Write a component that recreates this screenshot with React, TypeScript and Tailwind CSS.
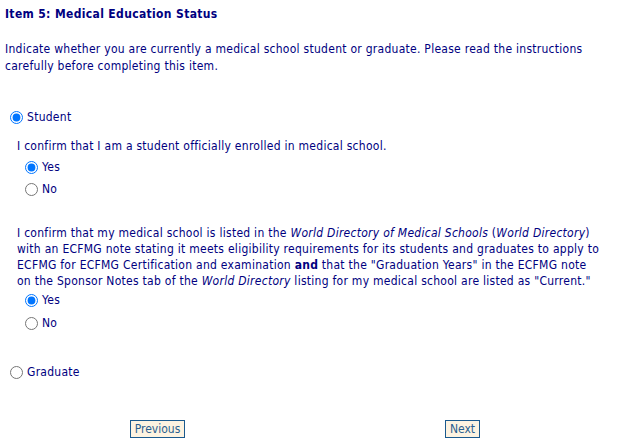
import React from 'react';

const FONT = 'font-["Tahoma","DejaVu_Sans_Condensed","DejaVu_Sans",sans-serif]';

function Radio({ checked, label, indent }: { checked?: boolean; label: string; indent?: boolean }) {
  return (
    <label className={`flex items-center h-[16px] ${indent ? 'pl-[20px]' : 'pl-[5px]'}`}>
      <input
        type="radio"
        defaultChecked={checked}
        className="m-0 w-[13px] h-[13px]"
        readOnly
      />
      <span className="ml-[4px]">{label}</span>
    </label>
  );
}

export default function App() {
  return (
    <div className={`w-[620px] h-[447px] bg-white px-[5px] text-[12px] leading-[16px] tracking-[0.27px] text-[#000080] ${FONT}`}>
      <div className="pr-[12px]">
        <div className="pt-[6px] font-bold tracking-[0.35px]">Item 5: Medical Education Status</div>

        <p className="mt-[19px] leading-[17px]">
          Indicate whether you are currently a medical school student or graduate. Please read the instructions
          carefully before completing this item.
        </p>

        {/* Student */}
        <div className="mt-[34px]">
          <Radio checked label="Student" />
        </div>

        <div className="pl-[12px]">
          <p className="mt-[13px]">I confirm that I am a student officially enrolled in medical school.</p>
          <div className="mt-[5px] flex flex-col gap-[6px] -ml-[12px]">
            <Radio checked indent label="Yes" />
            <Radio indent label="No" />
          </div>

          <p className="mt-[28px]">
            I confirm that my medical school is listed in the <i>World Directory of Medical Schools</i> (<i>World Directory</i>)
            with an ECFMG note stating it meets eligibility requirements for its students and graduates to apply to
            ECFMG for ECFMG Certification and examination <b>and</b> that the "Graduation Years" in the ECFMG note
            on the Sponsor Notes tab of the <i>World Directory</i> listing for my medical school are listed as "Current."
          </p>
          <div className="mt-[3px] flex flex-col gap-[7px] -ml-[12px]">
            <Radio checked indent label="Yes" />
            <Radio indent label="No" />
          </div>
        </div>

        {/* Graduate */}
        <div className="mt-[33px]">
          <Radio label="Graduate" />
        </div>
      </div>

      <div className="mt-[40px] grid grid-cols-2 justify-items-center">
        <button className="h-[18px] px-[4px] border border-[#1b5a8e] bg-[#fdf3e1] text-[#2a5f8f] text-[12px] leading-[16px] tracking-normal">
          Previous
        </button>
        <button className="h-[18px] px-[4px] border border-[#1b5a8e] bg-[#fdf3e1] text-[#2a5f8f] text-[12px] leading-[16px] tracking-normal">
          Next
        </button>
      </div>
    </div>
  );
}
